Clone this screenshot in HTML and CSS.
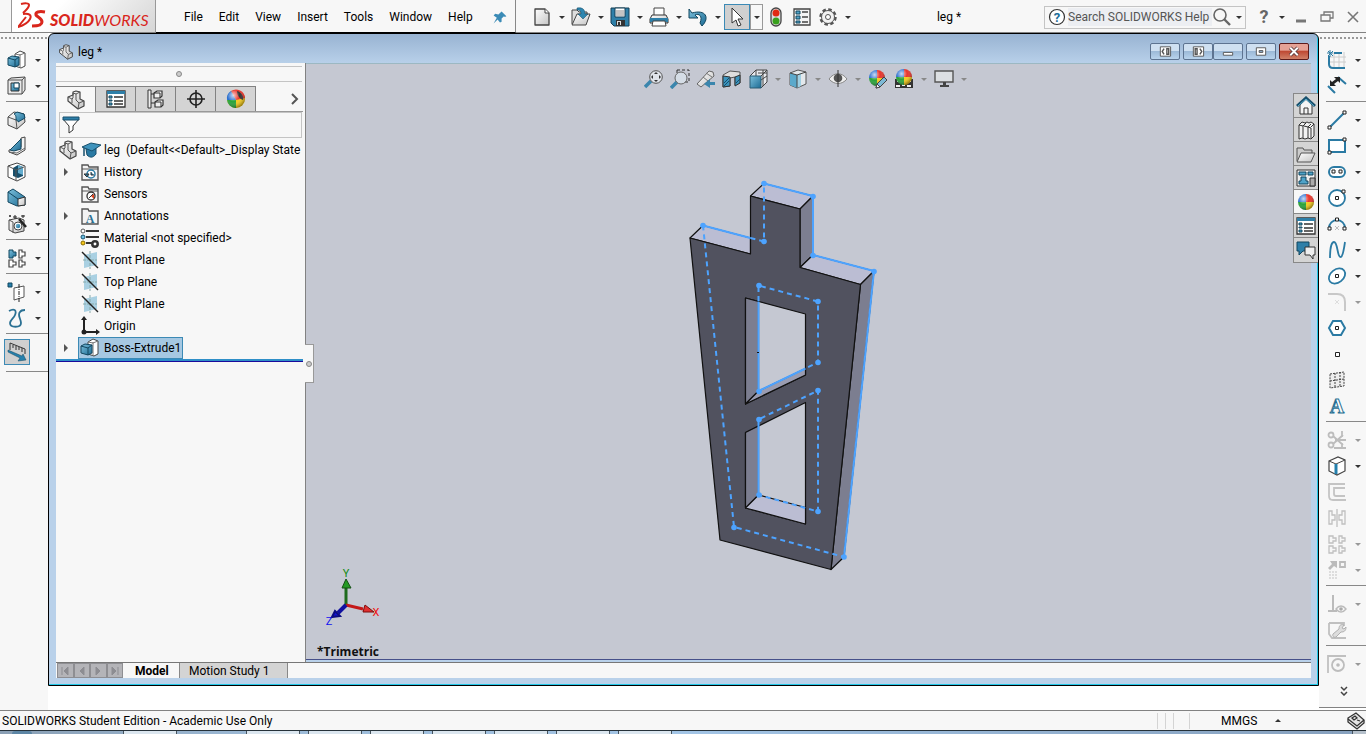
FILE: index.html
```html
<!DOCTYPE html>
<html lang="en">
<head>
  <meta charset="UTF-8">
  <meta name="viewport" content="width=device-width, initial-scale=1.0">
  <title>leg * - SOLIDWORKS</title>
  <link rel="stylesheet" href="styles.css">
</head>
<body>

  <!-- Icon sprite -->
  <svg class="sprite" aria-hidden="true">
    <defs>
      <linearGradient id="blue" x1="0" y1="0" x2="1" y2="1">
        <stop offset="0" stop-color="#7cc0dc"/><stop offset="1" stop-color="#1c6b94"/>
      </linearGradient>
      <linearGradient id="silver" x1="0" y1="0" x2="1" y2="1">
        <stop offset="0" stop-color="#fff"/><stop offset="1" stop-color="#c4c4c4"/>
      </linearGradient>
      <radialGradient id="shine" cx="0.35" cy="0.3" r="0.7">
        <stop offset="0" stop-color="#fff" stop-opacity="0.75"/><stop offset="0.5" stop-color="#fff" stop-opacity="0"/><stop offset="1" stop-color="#000" stop-opacity="0.35"/>
      </radialGradient>
    </defs>
    <symbol id="i-part" viewBox="0 0 20 20"><path d="M2 7l5-2V2l3-1 4 1v7l4 2v5l-6 3L2 11z" fill="url(#silver)" stroke="#444" stroke-width="1.2" stroke-linejoin="round"/><path d="M2 7l4 2 1-1V3l3 1v6l3 3 5-2M13 13l-1 6M6 9v4M10 4l4-2" fill="none" stroke="#555"/></symbol>
    <symbol id="i-extrude" viewBox="0 0 20 20"><path d="M8 4l5-3 5 2v13l-4 2-6-2z" fill="#fff" stroke="#444"/><path d="M13 4v14M8 4l5 1 5-2" fill="none" stroke="#777"/><path d="M1 8l4-2 7 1v8l-4 2-7-2z" fill="url(#blue)" stroke="#12465f"/><path d="M1 8l7 2v7M8 10l4-3" fill="none" stroke="#12465f"/></symbol>
    <symbol id="i-cut" viewBox="0 0 20 20"><path d="M1 4l3-2 14-1v13l-3 4H1z" fill="#e9e9e9" stroke="#444"/><path d="M1 4h14v14M15 4l3-3" fill="none" stroke="#555"/><path d="M4 7h8v8H4z" fill="url(#blue)" stroke="#333"/><path d="M7 7h5v5H7z" fill="#fff" stroke="#12465f"/></symbol>
    <symbol id="i-fillet" viewBox="0 0 20 20"><path d="M1 7l6-5 10 2 1 8-8 7-9-4z" fill="url(#silver)" stroke="#444" stroke-linejoin="round"/><path d="M1 7l8 3 1 9" fill="none" stroke="#555"/><path d="M9 10c0-4 0-5-2-6l3-2 7 2 1 4-7 4c0-1 0-2-2-2z" fill="url(#blue)" stroke="#12465f"/></symbol>
    <symbol id="i-rib" viewBox="0 0 20 20"><path d="M14 2l4-1v13l-8 5-8-3v-2l12-3z" fill="#f4f4f4" stroke="#444"/><path d="M14 3v10l-7 2-4-1z" fill="url(#blue)" stroke="#12465f"/><path d="M2 16l8 1 8-5" fill="none" stroke="#666"/></symbol>
    <symbol id="i-shell" viewBox="0 0 20 20"><path d="M1 4l9-3 8 3v11l-8 4-9-4z" fill="#fff" stroke="#444"/><path d="M6 6l5-3 5 2v9l-5 2-5-2z" fill="#174f6c"/><path d="M11 3l5 2v8l-5-2z" fill="#62acce"/><path d="M1 4l8 4v10M9 8l8-3" fill="none" stroke="#555"/></symbol>
    <symbol id="i-draft" viewBox="0 0 20 20"><path d="M1 4l5-3 12 8v8l-8 1-9-4z" fill="url(#blue)" stroke="#12465f" stroke-linejoin="round"/><path d="M11 11l7-2v8l-7 1z" fill="url(#silver)" stroke="#333"/><path d="M1 4l10 7" stroke="#12465f"/></symbol>
    <symbol id="i-wizard" viewBox="0 0 20 20"><path d="M2 6l10-2 5 2v11l-9 2-6-3z" fill="url(#silver)" stroke="#444"/><path d="M2 6l4 2v11" fill="none" stroke="#555"/><circle cx="11" cy="12" r="4" fill="#fff" stroke="#444"/><circle cx="11" cy="12" r="2.300" fill="url(#blue)"/><path d="M12 5l7 8" stroke="#222" stroke-width="2.500"/><path d="M8 1v4M6 3h4M16 1v3M14 2h4M3 1v2M2 2h2" stroke="#222"/></symbol>
    <symbol id="i-pattern" viewBox="0 0 20 20"><path d="M2 2h4v2h3v4H6v2H2z" fill="url(#blue)" stroke="#12465f"/><path d="M12 2h3v2h3v4h-3v2h-3zM2 12h4v2h3v3H6v2H2zM12 12h3v2h3v3h-3v2h-3z" fill="#fff" stroke="#444" stroke-width="1.200"/></symbol>
    <symbol id="i-refgeo" viewBox="0 0 20 20"><path d="M1 1h4v4H1z" fill="#2580ad" stroke="#12465f"/><path d="M7 6l10-2v11L7 18z" fill="#fff" stroke="#555"/><path d="M12 2v18" stroke="#222" stroke-dasharray="4 1 1 1"/></symbol>
    <symbol id="i-curve" viewBox="0 0 20 20"><path d="M2 3c5-3 8-1 6 4-1 3-5 5-5 8 0 5 11 5 11 0 0-4-4-8-1-11 1-2 3-2 5-2" fill="none" stroke="#2a7093" stroke-width="1.800"/></symbol>
    <symbol id="i-measure" viewBox="0 0 20 20"><path d="M3 8V1l15 6v5M6 3v3M9 4v4M12 5v3M15 6v4" fill="none" stroke="#333"/><path d="M1 8l14 6 1-2 3 6-8 1 2-3-12-6z" fill="#2580ad" stroke="#12465f" stroke-width="0.500"/></symbol>

    <symbol id="i-new" viewBox="0 0 20 20"><path d="M3 2h10l4 4v12H3z" fill="url(#silver)" stroke="#444" stroke-width="1.300" stroke-linejoin="round"/><path d="M13 2v4h4" fill="#fff" stroke="#444"/></symbol>
    <symbol id="i-open" viewBox="0 0 20 20"><path d="M1 17V3h5l2 2h8v3" fill="#ddd" stroke="#444"/><path d="M1 18L6 7h13l-4 11z" fill="url(#silver)" stroke="#444"/><path d="M6 1c6-1 8 2 8 6h3l-5 5-5-5h3c0-3-1-4-4-4z" fill="#2e86b0" stroke="#12465f" stroke-width="0.500"/></symbol>
    <symbol id="i-save" viewBox="0 0 20 20"><path d="M1 1h18v18H4l-3-3z" fill="#2e7fa8" stroke="#143e54"/><path d="M5 1h10v9H5z" fill="#fff" stroke="#143e54"/><path d="M6 4h8M6 6h8M6 8h8" stroke="#888"/><path d="M6 13h9v6H6z" fill="#333"/><path d="M7 14h4v4H7z" fill="#ddd"/><path d="M8 15h2v3H8z" fill="#333"/></symbol>
    <symbol id="i-print" viewBox="0 0 20 20"><path d="M5 8V1h10v7" fill="#fff" stroke="#444"/><path d="M3 8h14l2 4v4H1v-4z" fill="url(#silver)" stroke="#333"/><path d="M1 11h18v4H1z" fill="#2e7fa8"/><path d="M4 14h12l1 5H3z" fill="#fff" stroke="#444"/></symbol>
    <symbol id="i-undo" viewBox="0 0 20 20"><path d="M1 2v9h9L7 8c4-2 8 1 5 8l2 3c8-8 4-17-10-13z" fill="url(#blue)" stroke="#12465f"/></symbol>
    <symbol id="i-cursor" viewBox="0 0 20 20"><path d="M5 1v15l4-3 2 6 3-1-3-6h5z" fill="#fff" stroke="#333" stroke-linejoin="round"/></symbol>
    <symbol id="i-light" viewBox="0 0 20 20"><rect x="5" y="1" width="10" height="18" rx="5" fill="#ddd" stroke="#444" stroke-width="1.300"/><circle cx="10" cy="6" r="3.500" fill="#e12a12"/><circle cx="10" cy="14" r="3.500" fill="#38a01c"/></symbol>
    <symbol id="i-list" viewBox="0 0 20 20"><path d="M2 2h16v16H2z" fill="#f4f4f4" stroke="#444" stroke-width="1.300"/><path d="M4 4h4v3H4zM4 9h4v3H4zM4 14h4v2H4z" fill="#4fa3c8" stroke="#12465f"/><path d="M10 5h6M10 10h6M10 15h6" stroke="#444" stroke-width="1.300"/></symbol>
    <symbol id="i-gear" viewBox="0 0 20 20"><circle cx="10" cy="10" r="7.500" fill="none" stroke="#555" stroke-width="2.500" stroke-dasharray="3.500 2.390"/><circle cx="10" cy="10" r="6.500" fill="#f2f2f2" stroke="#555"/><circle cx="10" cy="10" r="2.500" fill="#fff" stroke="#555"/></symbol>
    <symbol id="i-pin" viewBox="0 0 20 20"><path d="M12 3l6 6-2 1-1-1-3 3 0 4-2 1-3-4-5 5 4-7-4-3 2-2 4 1 3-3z" fill="#3b8bb6"/></symbol>
    <symbol id="i-mag" viewBox="0 0 20 20"><circle cx="8" cy="8" r="6" fill="none" stroke="#666" stroke-width="1.600"/><path d="M12 12l6 6" stroke="#666" stroke-width="2.400"/></symbol>

    <symbol id="i-zoomfit" viewBox="0 0 20 20"><path d="M1 18l6-6" stroke="#3b86ad" stroke-width="3.500"/><circle cx="12" cy="8" r="6.300" fill="#dfe3ea" stroke="#555"/><path d="M12 3l2 2h-4zM12 13l2-2h-4zM7 8l2-2v4zM17 8l-2-2v4z" fill="#333"/></symbol>
    <symbol id="i-zoomarea" viewBox="0 0 20 20"><path d="M7 1h12v12H7z" fill="none" stroke="#333" stroke-dasharray="3 2"/><path d="M1 19l6-6" stroke="#3b86ad" stroke-width="3.500"/><circle cx="11" cy="9" r="6" fill="#d5dde6" stroke="#666"/></symbol>
    <symbol id="i-prevview" viewBox="0 0 20 20"><path d="M1 15L13 2l4 1 1 4L5 18z" fill="url(#silver)" stroke="#666"/><path d="M7 8l5 4M10 4l6 4" stroke="#777"/><path d="M19 13h-5v-3l-6 5 6 4v-3h5z" fill="#3b86ad"/></symbol>
    <symbol id="i-section" viewBox="0 0 20 20"><path d="M1 6l7-4 10 1v11l-5 2V8l-5 1v8l-7 1z" fill="#dedede" stroke="#555"/><path d="M1 7l7 1v9l-7 1zM13 8l5-2v8l-5 3z" fill="#3b93bd" stroke="#333"/><path d="M2 14l5-5M2 17l5-5M14 14l4-4" stroke="#174f6c"/></symbol>
    <symbol id="i-orient" viewBox="0 0 20 20"><path d="M2 7l6-6h11v12l-6 6M13 7l6-6M8 1v6M15 1v16M10 4h9M13 11l6-4" fill="#e8eaee" stroke="#444"/><path d="M2 7h11v12H2z" fill="url(#blue)" stroke="#2b5d75"/></symbol>
    <symbol id="i-display" viewBox="0 0 20 20"><path d="M2 4l8-3 8 2v12l-9 4-7-3z" fill="#e3e8ec" stroke="#555"/><path d="M2 4l7 2v13l-7-3z" fill="#5ba9cb"/><path d="M9 6l4-2v13l-4 2z" fill="#9fd0e4"/><path d="M2 4l7 2 9-3M9 6v13" fill="none" stroke="#444"/></symbol>
    <symbol id="i-eye" viewBox="0 0 20 20"><path d="M1 10c5-7 13-7 18 0-5 6-13 6-18 0z" fill="#eee" stroke="#888"/><circle cx="10" cy="9" r="4.300" fill="#555"/><path d="M10 1v17" stroke="#333"/></symbol>
    <symbol id="i-ball" viewBox="0 0 20 20"><path d="M10 10V2a8 8 0 0 1 8 8z" fill="#e8352c"/><path d="M10 10h8a8 8 0 0 1-8 8z" fill="#f5cb1c"/><path d="M10 10v8a8 8 0 0 1-8-8z" fill="#2aa33a"/><path d="M10 10H2a8 8 0 0 1 8-8z" fill="#2a6fd0"/><circle cx="10" cy="10" r="8" fill="url(#shine)"/></symbol>
    <symbol id="i-display-mgr" viewBox="0 0 20 20"><circle cx="10" cy="10" r="9" fill="#f5cb1c"/><path d="M10 11L5 2a9 9 0 0 1 14 7z" fill="#e8352c"/><path d="M10 11v8a9 9 0 0 1-9-8z" fill="#2aa33a"/><path d="M10 11H1a9 9 0 0 1 4-9z" fill="#2a6fd0"/><path d="M11 2c4 1 7 5 6 9-3-1-6-4-6-9z" fill="#333"/><circle cx="10" cy="10" r="9" fill="url(#shine)"/></symbol>
    <symbol id="i-checker" viewBox="0 0 20 20"><path d="M1 10h18v9H1z" fill="#333"/><path d="M3 11h3v2H3zM8 15h3v2H8zM14 11h3v2h-3zM2 16h4v2H2zM13 16h4v2h-4z" fill="#eee"/></symbol>
    <symbol id="i-pencil" viewBox="0 0 20 20"><path d="M8 19l1-4 7-7 3 3-7 7z" fill="#7db9d6" stroke="#444"/><path d="M8 19l1-4 3 3z" fill="#fff" stroke="#444"/></symbol>
    <symbol id="i-monitor" viewBox="0 0 20 20"><path d="M1 2h18v11H1z" fill="#dcdfe2" stroke="#555" stroke-width="1.400"/><path d="M9 13h3v3h3v2H6v-2h3z" fill="#444"/></symbol>

    <symbol id="i-home" viewBox="0 0 20 20"><path d="M4 9v9h12V9l-6-6z" fill="#f4f4f4" stroke="#333"/><path d="M8 18v-6h4v6" fill="none" stroke="#333"/><path d="M1 10l9-8 9 8" fill="none" stroke="#174f6c" stroke-width="3"/><path d="M2 10l8-7 8 7" fill="none" stroke="#5eb0d0"/></symbol>
    <symbol id="i-library" viewBox="0 0 20 20"><path d="M3 5l3-3 3 1 2-1 2 1 2-1 3 2v12l-3 3-3-1-3 1-3-1-3 1z" fill="#f2f2f2" stroke="#333"/><path d="M3 5l4 1v12M7 6l3-3M8 6l4 1v11M12 7l3-3M12 7l3 1v10M15 7l3-3" fill="none" stroke="#333"/></symbol>
    <symbol id="i-folder" viewBox="0 0 20 20"><path d="M1 17V4h6l1 2h8v3" fill="#ccc" stroke="#555"/><path d="M1 18L5 9h14l-4 9z" fill="url(#silver)" stroke="#555"/></symbol>
    <symbol id="i-palette" viewBox="0 0 20 20"><path d="M1 2h18v16H1z" fill="#eee" stroke="#333"/><path d="M3 4h7v3H3zM12 4h5v3h-5zM5 9h5v4h2v3H3v-3h2z" fill="#4fa3c8" stroke="#12465f"/><path d="M14 10h5v8h-5z" fill="#aaa" stroke="#333"/></symbol>
    <symbol id="i-props" viewBox="0 0 20 20"><path d="M1 2h18v16H1z" fill="#fff" stroke="#333" stroke-width="1.300"/><path d="M1 2h18v3H1z" fill="#2e7fa8"/><path d="M3 7h3v2H3zM3 11h3v1H3zM3 14h3v2H3z" fill="#4fa3c8" stroke="#12465f"/><path d="M8 8h9M8 12h9M8 15h9" stroke="#333" stroke-width="1.300"/></symbol>
    <symbol id="i-chat" viewBox="0 0 20 20"><path d="M1 2h12v9H7l-4 4v-4H1z" fill="#2e7fa8" stroke="#12465f"/><path d="M9 7h10v8h-2v4l-3-4H9z" fill="#eee" stroke="#333"/></symbol>

    <symbol id="i-sketch" viewBox="0 0 20 20"><path d="M7 2v16M12 2v16M17 2v16M3 7h16M3 12h16" stroke="#ccc"/><path d="M7 3h8M2 6v8q0 4 4 4h12" fill="none" stroke="#2a7aa3" stroke-width="2"/><path d="M3 0v7M0 3h6M1 1l5 5M6 1L1 6" stroke="#2a7aa3"/></symbol>
    <symbol id="i-dim" viewBox="0 0 20 20"><path d="M1 10l7 7M11 1l8 7" stroke="#2a7aa3" stroke-width="2"/><path d="M3 10V4l2 2 4-3-2-2h6v6l-2-2-4 3 2 2z" fill="#222"/></symbol>
    <symbol id="i-line" viewBox="0 0 20 20"><path d="M3 17L17 3" stroke="#2a7aa3" stroke-width="2"/><path d="M1 16h3v3H1zM16 1h3v3h-3z" fill="#fff" stroke="#222"/></symbol>
    <symbol id="i-rect" viewBox="0 0 20 20"><path d="M2 4h16v12H2z" fill="#fff" stroke="#2a7aa3" stroke-width="2"/><path d="M1 15h3v3H1zM16 2h3v3h-3z" fill="#fff" stroke="#222"/></symbol>
    <symbol id="i-slot" viewBox="0 0 20 20"><rect x="2" y="5" width="16" height="10" rx="5" fill="#fff" stroke="#2a7aa3" stroke-width="2"/><path d="M5 8h3v3H5zM12 8h3v3h-3z" fill="#fff" stroke="#222"/></symbol>
    <symbol id="i-circle" viewBox="0 0 20 20"><circle cx="10" cy="10" r="8" fill="#fff" stroke="#2a7aa3" stroke-width="1.800"/><path d="M8.500 8.500h3v3h-3zM15 2h3v3h-3z" fill="#fff" stroke="#222"/></symbol>
    <symbol id="i-arc" viewBox="0 0 20 20"><path d="M2 14a8 8 0 0 1 16 0" fill="none" stroke="#2a7aa3" stroke-width="1.800"/><path d="M1 13h3v3H1zM16 13h3v3h-3zM8.500 4h3v3h-3z" fill="#fff" stroke="#222"/><path d="M8 12l4 4M12 12l-4 4" stroke="#bbb"/></symbol>
    <symbol id="i-spline" viewBox="0 0 20 20"><path d="M3 18C3 6 5 2 7 2c4 0 3 16 7 15 2-1 3-8 4-15" fill="none" stroke="#2a7aa3" stroke-width="1.800"/></symbol>
    <symbol id="i-ellipse" viewBox="0 0 20 20"><ellipse cx="10" cy="10" rx="9" ry="6.500" transform="rotate(-38 10 10)" fill="#fff" stroke="#2a7aa3" stroke-width="1.800"/><path d="M8.500 8.500h3v3h-3z" fill="#fff" stroke="#222"/></symbol>
    <symbol id="i-round" viewBox="0 0 20 20"><path d="M1 2h9q8 0 8 8v9" fill="none" stroke="#c8c8c8" stroke-width="2"/><path d="M8 8l4 4M12 8l-4 4" stroke="#ddd"/></symbol>
    <symbol id="i-polygon" viewBox="0 0 20 20"><path d="M6 3h8l4 7-4 7H6l-4-7z" fill="#fff" stroke="#2a7aa3" stroke-width="2"/><path d="M8.500 8.500h3v3h-3z" fill="#fff" stroke="#222"/></symbol>
    <symbol id="i-point" viewBox="0 0 20 20"><path d="M8.500 8.500h4v4h-4z" fill="#fff" stroke="#222"/></symbol>
    <symbol id="i-plane3d" viewBox="0 0 20 20"><path d="M3 4l14-2v14L3 18zM8 3v14M13 2v14M3 11l14-2" fill="#eee" stroke="#444" stroke-dasharray="2 1"/></symbol>
    <symbol id="i-trim" viewBox="0 0 20 20"><g fill="none" stroke="#bdbdbd" stroke-width="1.800"><circle cx="4" cy="5" r="2.500"/><circle cx="4" cy="15" r="2.500"/><path d="M6 6l10 9M6 14l10-9M8 10h11M15 1v6M15 13v6M7 18h12"/></g></symbol>
    <symbol id="i-convert" viewBox="0 0 20 20"><path d="M2 5l9-4 7 3v11l-8 4-8-4z" fill="#fff" stroke="#444" stroke-width="1.200"/><path d="M2 5l7 3 9-4" fill="none" stroke="#444"/><path d="M9 8v10" stroke="#2580ad" stroke-width="3"/></symbol>
    <symbol id="i-offset" viewBox="0 0 20 20"><path d="M18 2H2v12q0 4 4 4h13M18 6H7v6q0 2 2 2h9" fill="none" stroke="#c4c4c4" stroke-width="1.800"/></symbol>
    <symbol id="i-mirror" viewBox="0 0 20 20"><path d="M2 3h3v4h3v5H5v4H2zM18 3h-3v4h-3v5h3v4h3zM10 1v18" fill="none" stroke="#c0c0c0" stroke-width="1.300"/></symbol>
    <symbol id="i-linear" viewBox="0 0 20 20"><path d="M2 2h4v2h3v3H6v2H2zM12 2h3v2h3v3h-3v2h-3zM2 12h4v2h3v3H6v2H2zM12 12h3v2h3v3h-3v2h-3z" fill="none" stroke="#c0c0c0" stroke-width="1.300"/></symbol>
    <symbol id="i-move" viewBox="0 0 20 20"><path d="M3 1h7v7L7 6l-4 4-2-2 4-4z" fill="#bbb"/><path d="M13 2h5v5h-5z" fill="none" stroke="#bbb" stroke-width="1.800"/><path d="M2 12h8M2 15h8M2 18h8" stroke="#ddd" stroke-width="2" stroke-dasharray="2 1"/></symbol>
    <symbol id="i-relations" viewBox="0 0 20 20"><path d="M6 1v16M1 17h9" stroke="#bbb" stroke-width="2"/><path d="M9 15c3-4 7-4 10 0-3 4-7 4-10 0z" fill="#f7f7f7" stroke="#bbb" stroke-width="1.400"/><circle cx="14" cy="15" r="1.800" fill="#aaa"/></symbol>
    <symbol id="i-repair" viewBox="0 0 20 20"><path d="M2 3h15v3M2 3v11l3 4h14" fill="none" stroke="#c0c0c0" stroke-width="1.800"/><path d="M6 14l6-5c0-4 2-5 5-4l-2 3 2 1 2-2c0 4-2 5-5 5l-5 5c-2 1-4-1-3-3z" fill="#ddd" stroke="#b0b0b0"/></symbol>
    <symbol id="i-snaps" viewBox="0 0 20 20"><path d="M1 19V2h18" fill="none" stroke="#c0c0c0" stroke-width="1.800"/><circle cx="11" cy="11" r="6" fill="none" stroke="#bdbdbd" stroke-width="1.800"/><circle cx="11" cy="11" r="1.800" fill="#bbb"/></symbol>

    <symbol id="i-config" viewBox="0 0 20 20"><path d="M2 1h3v18H2zM5 5h4M5 14h4" fill="#eee" stroke="#333"/><path d="M8 4l3-2h5v5l-2 2H8zM9 13l3-2h5v5l-2 2H9z" fill="#eee" stroke="#333" stroke-width="1.200"/><path d="M8 4h6v5M9 13h6v5" stroke="#333" fill="none"/></symbol>
    <symbol id="i-target" viewBox="0 0 20 20"><circle cx="10" cy="10" r="6" fill="none" stroke="#222" stroke-width="1.600"/><path d="M10 1v18M1 10h18" stroke="#222" stroke-width="1.600"/></symbol>
    <symbol id="i-filter" viewBox="0 0 20 20"><path d="M2 4l6 7v7l4-3v-4l6-7z" fill="#fff" stroke="#333"/><path d="M2 2h16v3H2z" fill="#2e7fa8" stroke="#174f6c"/></symbol>
    <symbol id="i-cap" viewBox="0 0 20 20"><path d="M5 9l1 6c3 3 6 3 9-1V8z" fill="#2a7aa3" stroke="#174f6c"/><path d="M1 7l9-4 10 2-9 6z" fill="#3f93bc" stroke="#174f6c"/><path d="M3 8v8" stroke="#174f6c" stroke-width="1.500"/></symbol>
    <symbol id="i-history" viewBox="0 0 20 20"><path d="M2 18V3h6l1 2h9v13z" fill="#f4f4f4" stroke="#555" stroke-width="1.400"/><path d="M2 7h16" stroke="#555"/><circle cx="11" cy="12" r="4" fill="#fff" stroke="#2a7aa3" stroke-width="1.500"/><path d="M11 10v3h3M4 12h5l-2 3z" stroke="#333" fill="#2a7aa3"/></symbol>
    <symbol id="i-sensor" viewBox="0 0 20 20"><path d="M2 18V3h6l1 2h9v13z" fill="#f4f4f4" stroke="#555" stroke-width="1.400"/><path d="M2 7h16" stroke="#555"/><circle cx="11" cy="12" r="4" fill="#fff" stroke="#333" stroke-width="1.300"/><path d="M11 12l3-2v5z" fill="#e2431e"/><path d="M9 14l4-4" stroke="#333"/></symbol>
    <symbol id="i-material" viewBox="0 0 20 20"><path d="M6 3h13M6 9h13M6 15h6" stroke="#333" stroke-width="2"/><circle cx="3" cy="3" r="2" fill="#fff" stroke="#555"/><circle cx="3" cy="9" r="2" fill="#6cc0e4" stroke="#174f6c"/><circle cx="3" cy="15" r="2" fill="#f5c518" stroke="#8a6d00"/><circle cx="15" cy="16" r="2.700" fill="#fff" stroke="#333" stroke-width="2.500"/></symbol>
    <symbol id="i-plane" viewBox="0 0 20 20"><path d="M4 5l13-3v13L4 18z" fill="#a9d0e2"/><path d="M10 1v18M3 10h14" stroke="#8aa" stroke-dasharray="3 1"/><path d="M2 2l16 16" stroke="#222" stroke-width="1.400"/></symbol>
    <symbol id="i-origin" viewBox="0 0 20 20"><path d="M4 3v13h13" fill="none" stroke="#222" stroke-width="2"/><path d="M4 0l3 4H1zM20 16l-4-3v6z" fill="#222"/><circle cx="4" cy="16" r="2.500" fill="#222"/></symbol>
    <symbol id="i-tag" viewBox="0 0 20 20"><path d="M2 7l8-5 8 7v3l-7 6-9-7z" fill="#e6e6e6" stroke="#333" stroke-width="1.300"/><path d="M2 8l9 7 7-6M6 7l3-2 2 2-3 2zM11 9l3 1" fill="none" stroke="#333" stroke-width="1.300"/></symbol>
  </svg>

  <header class="topbar">
    <div class="brand">
      <svg class="brand__mark" viewBox="0 0 28 28" aria-hidden="true">
        <path d="M3 2c4-1 8-1 8 1 0 3-3 5-6 8" fill="none" stroke="#d9261c" stroke-width="2"/>
        <path d="M5 12c6-1 9 1 7 5s-5 6-12 8l8-10" fill="none" stroke="#d9261c" stroke-width="2"/>
        <path d="M27 10c-6-1-10 0-9 3 1 2 6 3 6 7 0 3-4 4-10 4" fill="none" stroke="#d9261c" stroke-width="3"/>
      </svg>
      <span class="brand__name"><b>SOLID</b>WORKS</span>
    </div>
    <nav class="menu">
      <a href="#">File</a>
      <a href="#">Edit</a>
      <a href="#">View</a>
      <a href="#">Insert</a>
      <a href="#">Tools</a>
      <a href="#">Window</a>
      <a href="#">Help</a>
      <button class="pin" aria-label="Pin menu"><svg class="icon icon--small"><use href="#i-pin"/></svg></button>
    </nav>
    <div class="quick">
      <button class="tool" aria-label="New"><svg class="icon"><use href="#i-new"/></svg></button><button class="drop" aria-label="New options"></button>
      <button class="tool" aria-label="Open"><svg class="icon"><use href="#i-open"/></svg></button><button class="drop" aria-label="Open options"></button>
      <button class="tool" aria-label="Save"><svg class="icon"><use href="#i-save"/></svg></button><button class="drop" aria-label="Save options"></button>
      <button class="tool" aria-label="Print"><svg class="icon"><use href="#i-print"/></svg></button><button class="drop" aria-label="Print options"></button>
      <button class="tool" aria-label="Undo"><svg class="icon"><use href="#i-undo"/></svg></button><button class="drop" aria-label="Undo options"></button>
      <button class="tool tool--on" aria-label="Select"><svg class="icon"><use href="#i-cursor"/></svg></button><button class="drop drop--boxed" aria-label="Select options"></button>
      <button class="tool" aria-label="Rebuild"><svg class="icon"><use href="#i-light"/></svg></button>
      <button class="tool" aria-label="File properties"><svg class="icon"><use href="#i-list"/></svg></button>
      <button class="tool" aria-label="Options"><svg class="icon"><use href="#i-gear"/></svg></button><button class="drop" aria-label="Options menu"></button>
    </div>
    <span class="doc-name">leg *</span>
    <div class="search">
      <svg class="icon" viewBox="0 0 20 20"><circle cx="10" cy="10" r="7.500" fill="#fff" stroke="#333" stroke-width="1.200"/><text class="glyph-help" x="10" y="15" text-anchor="middle">?</text></svg>
      <input type="text" aria-label="Search SOLIDWORKS Help" placeholder="Search SOLIDWORKS Help">
      <button class="search__go" aria-label="Search"><svg class="icon"><use href="#i-mag"/></svg></button>
      <button class="drop" aria-label="Search options"></button>
    </div>
    <div class="app-buttons">
      <button class="app-help" aria-label="Help">?</button>
      <button class="drop" aria-label="Help options"></button>
      <button class="app-btn" aria-label="Minimize"><svg viewBox="0 0 14 14"><path d="M2 11h10" stroke="#777" stroke-width="3"/></svg></button>
      <button class="app-btn" aria-label="Restore"><svg viewBox="0 0 14 14"><path d="M4 5V2h9v6h-3M1 5h9v6H1z" fill="none" stroke="#777" stroke-width="1.300"/></svg></button>
      <button class="app-btn" aria-label="Close"><svg viewBox="0 0 14 14"><path d="M2 2l10 10M12 2L2 12" stroke="#777" stroke-width="1.600"/></svg></button>
    </div>
  </header>

  <div class="workspace">

    <!-- Features toolbar -->
    <aside class="side side--left">
      <div class="side__row"><button class="tool" aria-label="Extruded Boss"><svg class="icon"><use href="#i-extrude"/></svg></button><button class="drop" aria-label="More"></button></div>
      <div class="side__row"><button class="tool" aria-label="Extruded Cut"><svg class="icon"><use href="#i-cut"/></svg></button><button class="drop" aria-label="More"></button></div>
      <hr>
      <div class="side__row"><button class="tool" aria-label="Fillet"><svg class="icon"><use href="#i-fillet"/></svg></button><button class="drop" aria-label="More"></button></div>
      <div class="side__row"><button class="tool" aria-label="Rib"><svg class="icon"><use href="#i-rib"/></svg></button></div>
      <div class="side__row"><button class="tool" aria-label="Shell"><svg class="icon"><use href="#i-shell"/></svg></button></div>
      <div class="side__row"><button class="tool" aria-label="Draft"><svg class="icon"><use href="#i-draft"/></svg></button></div>
      <div class="side__row"><button class="tool" aria-label="Hole Wizard"><svg class="icon"><use href="#i-wizard"/></svg></button><button class="drop" aria-label="More"></button></div>
      <hr>
      <div class="side__row"><button class="tool" aria-label="Linear Pattern"><svg class="icon"><use href="#i-pattern"/></svg></button><button class="drop" aria-label="More"></button></div>
      <hr>
      <div class="side__row"><button class="tool" aria-label="Reference Geometry"><svg class="icon"><use href="#i-refgeo"/></svg></button><button class="drop" aria-label="More"></button></div>
      <div class="side__row"><button class="tool" aria-label="Curves"><svg class="icon"><use href="#i-curve"/></svg></button><button class="drop" aria-label="More"></button></div>
      <hr>
      <div class="side__row side__row--last"><button class="tool tool--on" aria-label="Instant3D"><svg class="icon"><use href="#i-measure"/></svg></button></div>
      <hr>
    </aside>

    <main class="window">
      <div class="window__title">
        <svg class="icon icon--small"><use href="#i-part"/></svg>
        <span>leg *</span>
        <div class="window__buttons">
          <button aria-label="Tile left"><svg viewBox="0 0 30 16"><path d="M10 3h11v10H10z" fill="#fff" stroke="#555"/><path d="M14 5l-2 3 2 3M17 5h2v6h-2z" fill="none" stroke="#555" stroke-width="1.500"/></svg></button>
          <div class="window__group">
            <button aria-label="Tile right"><svg viewBox="0 0 30 16"><path d="M10 3h11v10H10z" fill="#fff" stroke="#555"/><path d="M17 5l2 3-2 3M12 5h2v6h-2z" fill="none" stroke="#555" stroke-width="1.500"/></svg></button>
            <button aria-label="Minimize"><svg viewBox="0 0 30 16"><path d="M10 9h10v3H10z" fill="#fff" stroke="#555"/></svg></button>
          </div>
          <button aria-label="Maximize"><svg viewBox="0 0 30 16"><path d="M10 4h10v8H10z" fill="#fff" stroke="#555"/><path d="M13 7h4v2h-4z" fill="#8fb1d0" stroke="#555"/></svg></button>
          <button class="close" aria-label="Close"><svg viewBox="0 0 30 16"><path d="M11 4l8 8M19 4l-8 8" stroke="#5b3a3c" stroke-width="4"/><path d="M11 4l8 8M19 4l-8 8" stroke="#fff" stroke-width="2"/></svg></button>
        </div>
      </div>

      <div class="window__body">
        <section class="manager">
          <div class="manager__grip"><i></i></div>
          <div class="manager__tabs">
            <button class="active" aria-label="FeatureManager"><svg class="icon"><use href="#i-part"/></svg></button>
            <button aria-label="PropertyManager"><svg class="icon"><use href="#i-props"/></svg></button>
            <button aria-label="ConfigurationManager"><svg class="icon"><use href="#i-config"/></svg></button>
            <button aria-label="DimXpertManager"><svg class="icon"><use href="#i-target"/></svg></button>
            <button aria-label="DisplayManager"><svg class="icon"><use href="#i-display-mgr"/></svg></button>
            <button class="more" aria-label="More tabs"><svg viewBox="0 0 8 12"><path d="M1 1l5 5-5 5" fill="none" stroke="#555" stroke-width="2"/></svg></button>
          </div>
          <div class="manager__filter">
            <svg class="icon"><use href="#i-filter"/></svg>
            <input type="text" aria-label="Filter">
          </div>
          <ul class="tree">
            <li class="tree__root"><svg class="icon"><use href="#i-part"/></svg><svg class="icon"><use href="#i-cap"/></svg><span>leg&nbsp; (Default&lt;&lt;Default&gt;_Display State</span></li>
            <li><button class="expand" aria-label="Expand"></button><span class="tree__item"><svg class="icon"><use href="#i-history"/></svg>History</span></li>
            <li><span class="tree__item"><svg class="icon"><use href="#i-sensor"/></svg>Sensors</span></li>
            <li><button class="expand" aria-label="Expand"></button><span class="tree__item"><svg class="icon" viewBox="0 0 20 20"><path d="M2 18V3h6l1 2h9v13z" fill="#f4f4f4" stroke="#555" stroke-width="1.400"/><text class="glyph-b" x="10" y="17" text-anchor="middle">A</text></svg>Annotations</span></li>
            <li><span class="tree__item"><svg class="icon"><use href="#i-material"/></svg>Material &lt;not specified&gt;</span></li>
            <li><span class="tree__item"><svg class="icon"><use href="#i-plane"/></svg>Front Plane</span></li>
            <li><span class="tree__item"><svg class="icon"><use href="#i-plane"/></svg>Top Plane</span></li>
            <li><span class="tree__item"><svg class="icon"><use href="#i-plane"/></svg>Right Plane</span></li>
            <li><span class="tree__item"><svg class="icon"><use href="#i-origin"/></svg>Origin</span></li>
            <li><button class="expand" aria-label="Expand"></button><span class="tree__item tree__item--selected"><svg class="icon"><use href="#i-extrude"/></svg>Boss-Extrude1</span></li>
          </ul>
          <div class="rollback"></div>
          <button class="manager__handle" aria-label="Collapse panel"><i></i></button>
        </section>

        <section class="viewport">
          <svg class="model" viewBox="306 64 1005 595" preserveAspectRatio="xMinYMin slice" role="img" aria-label="leg part">
            <g stroke="#111" stroke-width="1.200" stroke-linejoin="round">
              <path d="M690 238l13-12.500 47.500 12.500v16z" fill="#bbbdd3"/>
              <path d="M750.500 196l13.500-12.500 49 12.500-13 13z" fill="#bbbdd3"/>
              <path d="M800 209l13-13v59l-13 12.500z" fill="#7c7e90"/>
              <path d="M800 267.500l13-12.500 61 16-13.500 13.500z" fill="#bbbdd3"/>
              <path d="M860.500 284.500L874 271l-30 286-13 12.500z" fill="#7c7e90"/>
              <path d="M690 238l60.500 16v-58l49.500 13v58.500l60.500 17-29.500 285L720 540z" fill="#51525f"/>
              <path d="M745.500 298l60 16v61l-60 29z" fill="#c5c8d2"/>
              <path d="M745.500 298l13 3.500V391l-13 13z" fill="#7c7e90"/>
              <path d="M745.500 404l13-13 47-22.500v6.500z" fill="#9a9cb1"/>
              <path d="M745.500 432.500l60-30V524l-60-16z" fill="#c5c8d2"/>
              <path d="M745.500 432.500l13-6.500v69l-13 13z" fill="#7c7e90"/>
              <path d="M745.500 508l13-13 47 12.500V524z" fill="#bbbdd3"/>
            </g>
            <g fill="none" stroke="#4da3ff" stroke-width="2">
              <path d="M703 225.500l47.500 12.500M764 183.500l49 12.500v59l61 16-30 286M758.500 301.500V391l47-22.500M758.500 426v69"/>
              <path d="M750.500 238l13.500 3.500v-58M703 225.500L734 527l110 30M758.500 301V285.500l59.500 16v61l-13 6M758.500 426v-6.500l59.500-29v121l-59-16.500" stroke-dasharray="5 4"/>
            </g>
            <g fill="#4da3ff">
              <circle cx="703" cy="225.500" r="2.800"/><circle cx="764" cy="183.500" r="2.800"/><circle cx="813" cy="196.500" r="2.800"/><circle cx="764" cy="241.500" r="2.800"/>
              <circle cx="813" cy="255.500" r="2.800"/><circle cx="874" cy="271.500" r="2.800"/><circle cx="844" cy="557" r="2.800"/><circle cx="734" cy="527.500" r="2.800"/>
              <circle cx="759" cy="285.500" r="2.800"/><circle cx="818" cy="301.500" r="2.800"/><circle cx="818" cy="362.500" r="2.800"/><circle cx="759" cy="391.500" r="2.800"/>
              <circle cx="759" cy="419.500" r="2.800"/><circle cx="818" cy="390.500" r="2.800"/><circle cx="818" cy="511.500" r="2.800"/><circle cx="759" cy="495" r="2.800"/>
            </g>
            <path d="M757 352.500h2" stroke="#111"/>
            <!-- Orientation triad -->
            <path d="M346 605v-18" stroke="#1d6b1d" stroke-width="3"/><path d="M346 579l-4 9h9z" fill="#249a24" stroke="#145014"/>
            <path d="M346 605l17 4" stroke="#c41818" stroke-width="3"/><path d="M374 612l-9-7-2 7z" fill="#e03030" stroke="#7d0c0c"/>
            <path d="M346 605l-8 8" stroke="#1010a0" stroke-width="4"/><path d="M332 617l3-6 5 5z" fill="#1414d0" stroke="#0c0c80" stroke-width="2"/>
            <g class="axis" text-anchor="middle"><text x="346" y="577" fill="#128a12">Y</text><text x="376" y="616" fill="#f01010">X</text><text x="329" y="625" fill="#1010f0">Z</text></g>
          </svg>

          <div class="headsup">
            <button class="tool" aria-label="Zoom to Fit"><svg class="icon"><use href="#i-zoomfit"/></svg></button>
            <button class="tool" aria-label="Zoom to Area"><svg class="icon"><use href="#i-zoomarea"/></svg></button>
            <button class="tool" aria-label="Previous View"><svg class="icon"><use href="#i-prevview"/></svg></button>
            <button class="tool" aria-label="Section View"><svg class="icon"><use href="#i-section"/></svg></button>
            <button class="tool" aria-label="View Orientation"><svg class="icon"><use href="#i-orient"/></svg></button><button class="drop" aria-label="More"></button>
            <button class="tool" aria-label="Display Style"><svg class="icon"><use href="#i-display"/></svg></button><button class="drop" aria-label="More"></button>
            <button class="tool" aria-label="Hide/Show Items"><svg class="icon"><use href="#i-eye"/></svg></button><button class="drop" aria-label="More"></button>
            <button class="tool" aria-label="Edit Appearance"><svg class="icon" viewBox="0 0 20 20"><use href="#i-ball" x="-1" y="-1" width="20" height="20"/><use href="#i-pencil" width="20" height="20"/></svg></button>
            <button class="tool" aria-label="Apply Scene"><svg class="icon" viewBox="0 0 20 20"><use href="#i-checker" width="20" height="20"/><use href="#i-ball" x="0" y="-2" width="20" height="20"/></svg></button><button class="drop" aria-label="More"></button>
            <button class="tool" aria-label="View Settings"><svg class="icon"><use href="#i-monitor"/></svg></button><button class="drop" aria-label="More"></button>
          </div>
          <span class="view-name">*Trimetric</span>
        </section>
      </div>

      <footer class="window__tabs">
        <div class="pager">
          <button aria-label="First"><svg viewBox="0 0 14 12"><path d="M4 2v8M10 2L6 6l4 4z" fill="#8d8d92" stroke="#8d8d92"/></svg></button>
          <button aria-label="Previous"><svg viewBox="0 0 14 12"><path d="M9 2L5 6l4 4z" fill="#8d8d92" stroke="#8d8d92"/></svg></button>
          <button aria-label="Next"><svg viewBox="0 0 14 12"><path d="M5 2l4 4-4 4z" fill="#8d8d92" stroke="#8d8d92"/></svg></button>
          <button aria-label="Last"><svg viewBox="0 0 14 12"><path d="M10 2v8M4 2l4 4-4 4z" fill="#8d8d92" stroke="#8d8d92"/></svg></button>
        </div>
        <button class="sheet sheet--active">Model</button>
        <button class="sheet">Motion Study 1</button>
      </footer>

      <!-- Task pane tabs over the window edge -->
      <div class="taskpane">
        <button aria-label="Resources"><svg class="icon"><use href="#i-home"/></svg></button>
        <button aria-label="Design Library"><svg class="icon"><use href="#i-library"/></svg></button>
        <button aria-label="File Explorer"><svg class="icon"><use href="#i-folder"/></svg></button>
        <button aria-label="View Palette"><svg class="icon"><use href="#i-palette"/></svg></button>
        <button class="active" aria-label="Appearances"><svg class="icon"><use href="#i-ball"/></svg></button>
        <button aria-label="Custom Properties"><svg class="icon"><use href="#i-props"/></svg></button>
        <button aria-label="Forum"><svg class="icon"><use href="#i-chat"/></svg></button>
      </div>
    </main>

    <!-- Sketch toolbar -->
    <aside class="side side--right">
      <div class="side__row"><button class="tool" aria-label="Sketch"><svg class="icon"><use href="#i-sketch"/></svg></button><button class="drop" aria-label="More"></button></div>
      <div class="side__row"><button class="tool" aria-label="Smart Dimension"><svg class="icon"><use href="#i-dim"/></svg></button><button class="drop" aria-label="More"></button></div>
      <hr>
      <div class="side__row"><button class="tool" aria-label="Line"><svg class="icon"><use href="#i-line"/></svg></button><button class="drop" aria-label="More"></button></div>
      <div class="side__row"><button class="tool" aria-label="Rectangle"><svg class="icon"><use href="#i-rect"/></svg></button><button class="drop" aria-label="More"></button></div>
      <div class="side__row"><button class="tool" aria-label="Slot"><svg class="icon"><use href="#i-slot"/></svg></button><button class="drop" aria-label="More"></button></div>
      <div class="side__row"><button class="tool" aria-label="Circle"><svg class="icon"><use href="#i-circle"/></svg></button><button class="drop" aria-label="More"></button></div>
      <div class="side__row"><button class="tool" aria-label="Arc"><svg class="icon"><use href="#i-arc"/></svg></button><button class="drop" aria-label="More"></button></div>
      <div class="side__row"><button class="tool" aria-label="Spline"><svg class="icon"><use href="#i-spline"/></svg></button><button class="drop" aria-label="More"></button></div>
      <div class="side__row"><button class="tool" aria-label="Ellipse"><svg class="icon"><use href="#i-ellipse"/></svg></button><button class="drop" aria-label="More"></button></div>
      <div class="side__row"><button class="tool" aria-label="Sketch Fillet"><svg class="icon"><use href="#i-round"/></svg></button><button class="drop drop--off" aria-label="More"></button></div>
      <div class="side__row"><button class="tool" aria-label="Polygon"><svg class="icon"><use href="#i-polygon"/></svg></button></div>
      <div class="side__row"><button class="tool" aria-label="Point"><svg class="icon"><use href="#i-point"/></svg></button></div>
      <div class="side__row"><button class="tool" aria-label="Plane"><svg class="icon"><use href="#i-plane3d"/></svg></button></div>
      <div class="side__row"><button class="tool" aria-label="Text"><svg class="icon" viewBox="0 0 20 20"><text class="glyph-a" x="10" y="17" text-anchor="middle">A</text></svg></button></div>
      <hr>
      <div class="side__row"><button class="tool" aria-label="Trim"><svg class="icon"><use href="#i-trim"/></svg></button><button class="drop drop--off" aria-label="More"></button></div>
      <div class="side__row"><button class="tool" aria-label="Convert Entities"><svg class="icon"><use href="#i-convert"/></svg></button><button class="drop" aria-label="More"></button></div>
      <div class="side__row"><button class="tool" aria-label="Offset"><svg class="icon"><use href="#i-offset"/></svg></button></div>
      <div class="side__row"><button class="tool" aria-label="Mirror"><svg class="icon"><use href="#i-mirror"/></svg></button></div>
      <div class="side__row"><button class="tool" aria-label="Linear Sketch Pattern"><svg class="icon"><use href="#i-linear"/></svg></button><button class="drop drop--off" aria-label="More"></button></div>
      <div class="side__row"><button class="tool" aria-label="Move Entities"><svg class="icon"><use href="#i-move"/></svg></button><button class="drop drop--off" aria-label="More"></button></div>
      <hr>
      <div class="side__row"><button class="tool" aria-label="Relations"><svg class="icon"><use href="#i-relations"/></svg></button><button class="drop drop--off" aria-label="More"></button></div>
      <div class="side__row"><button class="tool" aria-label="Repair Sketch"><svg class="icon"><use href="#i-repair"/></svg></button></div>
      <hr>
      <div class="side__row"><button class="tool" aria-label="Quick Snaps"><svg class="icon"><use href="#i-snaps"/></svg></button><button class="drop drop--off" aria-label="More"></button></div>
      <button class="side__more" aria-label="More tools"><svg viewBox="0 0 8 10"><path d="M1 1l3 3 3-3M1 6l3 3 3-3" fill="none" stroke="#444" stroke-width="1.500"/></svg></button>
    </aside>
  </div>

  <footer class="status">
    <span class="status__text">SOLIDWORKS Student Edition - Academic Use Only</span>
    <div class="status__cells"><i></i><i></i><i></i><i></i></div>
    <button class="status__units">MMGS</button>
    <button class="status__tag" aria-label="Tags"><svg class="icon"><use href="#i-tag"/></svg></button>
  </footer>

  <div class="taskbar">
    <i class="taskbar__start"></i>
    <i class="taskbar__app"></i>
    <i class="taskbar__gap"></i>
    <i class="taskbar__app"></i>
    <i class="taskbar__app"></i>
    <i class="taskbar__app"></i>
    <i class="taskbar__app"></i>
    <i class="taskbar__app"></i>
    <i class="taskbar__app"></i>
    <i class="taskbar__app"></i>
    <i class="taskbar__desktop"></i>
  </div>

</body>
</html>
```

FILE: styles.css
```css
:root {
  --panel: #f7f7f7;
  --line: #828282;
  --frame: #b9d1ea;
  --canvas: #c5c8d2;
  --tab: #d4d4d4;
  --red: #d9261c;
}

* {
  box-sizing: border-box;
}

body {
  margin: 0;
  min-height: 100vh;
  display: flex;
  flex-direction: column;
  background-color: #fff;
  color: #000;
  font-family: "Roboto", "Open Sans", sans-serif;
  font-size: 12px;
  line-height: 16px;
  overflow: hidden;
}

button {
  padding: 0;
  border: none;
  background: none;
  font: inherit;
  color: inherit;
}

input {
  min-width: 0;
  border: none;
  padding: 0;
  font: inherit;
}

.sprite {
  position: absolute;
  width: 0;
  height: 0;
}

.icon {
  display: block;
  flex: none;
  width: 20px;
  height: 20px;
}

.icon--small {
  width: 16px;
  height: 16px;
}

.glyph-a {
  font: 700 20px "Liberation Serif", serif;
  fill: #fff;
  stroke: #2a7093;
}

.glyph-b {
  font: 700 12px "Liberation Serif", serif;
  fill: #2a7093;
}

.glyph-help {
  font-size: 13px;
  font-weight: 700;
  fill: #1d6d99;
}

/* Toolbar buttons */
.tool {
  flex: none;
  display: flex;
  align-items: center;
  justify-content: center;
  width: 26px;
  height: 26px;
}

.tool--on {
  background-color: #d0d0d0;
  border: 1px solid #3c8ab5;
}

.drop {
  flex: none;
  display: flex;
  align-items: center;
  justify-content: center;
  width: 13px;
  height: 26px;
}

.drop::after {
  content: "";
  border: 3px solid transparent;
  border-top-color: #333;
  border-bottom: none;
}

.drop--boxed {
  border: 1px solid #999;
}

.drop--off::after {
  border-top-color: #999;
}

/* Top bar */
.topbar {
  display: flex;
  align-items: center;
  height: 33px;
  padding-top: 2px;
  background-color: var(--panel);
  border-bottom: 1px solid var(--line);
}

.brand {
  flex: none;
  align-self: flex-end;
  display: flex;
  align-items: center;
  gap: 4px;
  width: 145px;
  height: 32px;
  margin-left: 11px;
  padding-left: 6px;
  border-left: 1px solid #999;
  border-right: 1px solid #999;
  background: linear-gradient(135deg, #fff 30%, #d6d6d6);
}

.brand__mark {
  flex: none;
  width: 28px;
  height: 28px;
}

.brand__name {
  padding-top: 8px;
  color: var(--red);
  font-family: "Lato", sans-serif;
  font-size: 16px;
  font-style: italic;
}

.brand__name b {
  font-weight: 900;
}

.menu {
  flex: none;
  align-self: flex-end;
  display: flex;
  align-items: center;
  gap: 16px;
  width: 360px;
  height: 33px;
  margin-bottom: -1px;
  padding-top: 1px;
  padding-left: 28px;
  border-right: 1px solid #888;
  border-bottom: 1px solid #000;
}

.menu a {
  color: #000;
  text-decoration: none;
}

.pin {
  margin-left: auto;
  margin-right: 7px;
}

.quick {
  display: flex;
  margin-left: 13px;
}

.doc-name {
  flex: 1;
  text-align: center;
}

.search {
  flex: none;
  display: flex;
  align-items: center;
  width: 202px;
  height: 23px;
  padding-left: 2px;
  border: 1px solid #c4c4c4;
}

.search input {
  width: 144px;
  height: 18px;
  margin-left: 1px;
  background-color: #eceef2;
}

.search input::placeholder {
  color: #555;
  opacity: 1;
}

.app-buttons {
  flex: none;
  display: flex;
  align-items: center;
  margin-left: 10px;
}

.app-help {
  width: 16px;
  margin-right: 3px;
  color: #666;
  font-size: 18px;
  font-weight: 700;
}

.app-btn {
  display: flex;
  align-items: center;
  justify-content: center;
  width: 26px;
  height: 20px;
}

.app-btn svg {
  width: 14px;
  height: 14px;
}

/* Workspace */
.workspace {
  flex: 1;
  display: flex;
  align-items: stretch;
}

.side {
  flex: none;
  padding-top: 14px;
  background-color: var(--panel);
  background-image: radial-gradient(circle, #999 1px, transparent 1px);
  background-size: 4px 4px;
  background-position: 4px 3px;
  background-repeat: repeat-x;
}

.side .drop {
  width: 15px;
}

.side--left {
  width: 48px;
  padding-left: 4px;
}

.side--right {
  width: 47px;
  margin-bottom: 2px;
  padding-left: 5px;
  border-bottom: 1px solid var(--line);
}

.side__row {
  display: flex;
}

.side__row--last {
  margin-bottom: 4px;
}

.side hr {
  height: 8px;
  margin: 0;
  border: none;
  background: linear-gradient(#888, #888) 2px 2px / 100% 1px no-repeat;
}

.side__more {
  display: block;
  width: 40px;
  height: 30px;
}

.side__more svg {
  width: 8px;
  height: 10px;
}

/* Document window */
.window {
  position: relative;
  flex: 1;
  min-width: 0;
  display: flex;
  flex-direction: column;
  margin-bottom: 24px;
  padding: 0 7px 7px;
  border: 1px solid #000;
  border-radius: 6px 6px 0 0;
  background: linear-gradient(#98b3d2, var(--frame) 30px);
  box-shadow: inset -1px -1px 0 #22c8e8;
}

.window__title {
  display: flex;
  align-items: center;
  gap: 4px;
  height: 29px;
  padding: 6px 2px 0;
}

.window__buttons {
  display: flex;
  gap: 3px;
  margin-left: auto;
}

.window__group {
  display: flex;
}

.window__buttons button {
  width: 30px;
  height: 17px;
  border: 1px solid #5d7390;
  border-radius: 2px;
  background: linear-gradient(#cfe0f1 45%, #9dbad8 50%, #b8d3ec);
}

.window__buttons .close {
  border-color: #5c1b1b;
  background: linear-gradient(#e5a296 40%, #bf4a35 50%, #d08068);
}

.window__buttons svg {
  display: block;
  width: 28px;
  height: 15px;
}

.window__body {
  flex: 1;
  min-height: 0;
  display: flex;
}

/* Feature manager */
.manager {
  position: relative;
  flex: none;
  width: 250px;
  padding-top: 3px;
  background-color: var(--panel);
  border-right: 1px solid var(--line);
}

.manager__grip {
  display: flex;
  align-items: center;
  justify-content: center;
  height: 16px;
  margin-right: 3px;
  border-top: 1px solid #c4c4c4;
  border-bottom: 1px solid #c4c4c4;
}

.manager i {
  width: 6px;
  height: 6px;
  border: 1px solid #888;
  border-radius: 50%;
  background-color: #ccc;
}

.manager__tabs {
  display: flex;
  height: 26px;
  margin: 4px 2px 0 0;
  border-bottom: 1px solid #999;
}

.manager__tabs button {
  display: flex;
  align-items: center;
  justify-content: center;
  width: 40px;
  border-top: 1px solid var(--line);
  border-right: 1px solid var(--line);
  background-color: var(--tab);
}

.manager__tabs .active {
  height: 26px;
  background-color: var(--panel);
}

.manager__tabs .more {
  width: 16px;
  margin-left: auto;
  border: none;
  background: none;
}

.more svg {
  width: 8px;
  height: 12px;
}

.manager__filter {
  display: flex;
  align-items: center;
  height: 26px;
  margin: 0 3px;
  padding-left: 1px;
  border: 1px solid #c4c4c4;
}

.manager__filter input {
  flex: 1;
  background: none;
}

.tree {
  margin: 0 2px 0 0;
  padding: 1px 0 0;
  list-style: none;
  overflow: hidden;
}

.tree li {
  display: flex;
  align-items: center;
  justify-content: flex-end;
  height: 22px;
  white-space: nowrap;
}

.tree .tree__root {
  justify-content: flex-start;
  gap: 3px;
  padding-left: 2px;
}

.tree__item {
  display: flex;
  align-items: center;
  gap: 4px;
  height: 22px;
  margin-right: auto;
  padding: 0 1px;
  border: 1px solid transparent;
}

.tree li > .tree__item:first-child {
  margin-left: 22px;
}

.tree__item--selected {
  background-color: #a6c8e2;
  border-color: #3c8ab5;
}

.expand {
  width: 22px;
  padding-left: 8px;
}

.expand::before {
  content: "";
  display: block;
  width: 0;
  border: 4px solid transparent;
  border-left-color: #555;
  border-right: none;
}

.rollback {
  height: 3px;
  margin-right: 2px;
  background-color: #2f8fc8;
  border-bottom: 1px solid #1a0a9c;
}

.manager__handle {
  position: absolute;
  top: 281px;
  right: -9px;
  z-index: 1;
  width: 9px;
  height: 39px;
  display: flex;
  align-items: center;
  justify-content: center;
  background-color: var(--panel);
  border: 1px solid #999;
  border-left: none;
}

/* Graphics area */
.viewport {
  position: relative;
  flex: 1;
  min-width: 0;
  display: flex;
  flex-direction: column;
  justify-content: space-between;
  margin-bottom: 2px;
  background-color: var(--canvas);
  border-top: 1px solid #9cb8c2;
  border-bottom: 1px solid #46508a;
}

.model {
  position: absolute;
  inset: 0;
  width: 100%;
  height: 100%;
}

.axis {
  font-size: 11px;
}

.view-name {
  position: relative;
  padding-left: 11px;
  color: #111;
  font-family: "Open Sans", sans-serif;
  font-weight: 700;
  line-height: 14px;
}

.headsup {
  position: relative;
  display: flex;
  justify-content: center;
  margin: 2px 6px 0 0;
}

.headsup .drop {
  width: 14px;
}

.headsup .drop::after {
  border-top-color: #888;
}

.window__tabs {
  display: flex;
  height: 16px;
  background-color: var(--panel);
  border-top: 1px solid #777;
}

.pager {
  display: flex;
  width: 67px;
  padding-left: 1px;
}

.pager button {
  flex: 1;
  background-color: #b4b4b8;
  border: 1px solid #8e8e92;
}

.pager svg {
  display: block;
  width: 14px;
  height: 12px;
}

.sheet {
  width: 109px;
  padding: 0 17px 0 9px;
  line-height: 14px;
  text-align: left;
  white-space: nowrap;
  background-color: var(--tab);
  border-left: 1px solid #888;
  border-right: 1px solid #888;
}

.sheet--active {
  width: 56px;
  padding: 0 0 0 12px;
  font-weight: 700;
  background: none;
  border: none;
}

.taskpane {
  position: absolute;
  top: 59px;
  right: 0;
  width: 25px;
  border: 1px solid #888;
  border-right: none;
}

.taskpane button {
  display: flex;
  align-items: center;
  justify-content: center;
  width: 100%;
  height: 24px;
  background-color: var(--tab);
  border-bottom: 1px solid #888;
}

.taskpane button:last-child {
  border-bottom: none;
}

.taskpane .active {
  background-color: var(--panel);
}

/* Status bar */
.status {
  display: flex;
  align-items: center;
  height: 20px;
  padding-left: 2px;
  background-color: var(--panel);
  border-top: 1px solid var(--line);
}

.status__text {
  flex: 1;
}

.status__cells {
  display: flex;
  gap: 7px;
  margin-right: 31px;
}

.status__cells i {
  width: 1px;
  height: 16px;
  background-color: #d4d4d4;
}

.status__cells i:last-child {
  margin-left: 8px;
}

.status__units {
  display: flex;
  align-items: center;
  gap: 18px;
  width: 125px;
}

.status__units::after {
  content: "";
  border: 3px solid transparent;
  border-bottom-color: #333;
  border-top: none;
}

/* Taskbar edge */
.taskbar {
  display: flex;
  gap: 8px;
  height: 4px;
  background: linear-gradient(90deg, #8a9fb4, #9dbbd8 20%, #a3c5e6 50%, #86a0bd);
  border-top: 1px solid #26323a;
}

.taskbar__start {
  width: 20px;
  margin: 0 83px 0 12px;
  border-radius: 10px 10px 0 0;
  background-color: #5d86a5;
}

.taskbar__app {
  width: 54px;
  border: 1px solid #45525c;
  border-top: none;
  border-bottom: none;
  background-color: #dbe6ef;
}

.taskbar__gap {
  width: 53px;
}

.taskbar__desktop {
  width: 14px;
  margin-left: auto;
  background-color: #b5c0cb;
  border-left: 1px solid #45525c;
}
```
